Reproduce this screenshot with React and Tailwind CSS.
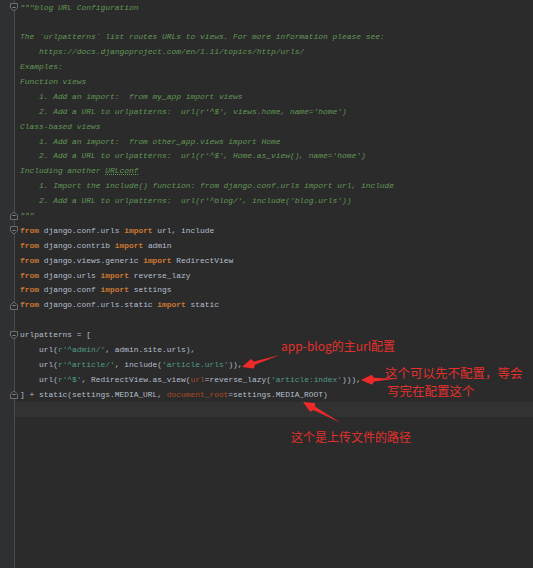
import React from 'react'

const C = {
  doc: 'text-[#629755] italic',
  docu: 'text-[#629755] italic underline decoration-dotted',
  kw: 'text-[#cc7832] font-bold',
  t: 'text-[#b3bfcb]',
  s: 'text-[#4f9c88]',
  p: 'text-[#aa4926]',
}

const d = s => [['doc', s]]

const lines = [
  d('"""blog URL Configuration'),
  [],
  d('The `urlpatterns` list routes URLs to views. For more information please see:'),
  d('    https://docs.djangoproject.com/en/1.11/topics/http/urls/'),
  d('Examples:'),
  d('Function views'),
  d('    1. Add an import:  from my_app import views'),
  d("    2. Add a URL to urlpatterns:  url(r'^$', views.home, name='home')"),
  d('Class-based views'),
  d('    1. Add an import:  from other_app.views import Home'),
  d("    2. Add a URL to urlpatterns:  url(r'^$', Home.as_view(), name='home')"),
  [['doc', 'Including another '], ['docu', 'URLconf']],
  d('    1. Import the include() function: from django.conf.urls import url, include'),
  d("    2. Add a URL to urlpatterns:  url(r'^blog/', include('blog.urls'))"),
  d('"""'),
  [['kw', 'from'], ['t', ' django.conf.urls '], ['kw', 'import'], ['t', ' url, include']],
  [['kw', 'from'], ['t', ' django.contrib '], ['kw', 'import'], ['t', ' admin']],
  [['kw', 'from'], ['t', ' django.views.generic '], ['kw', 'import'], ['t', ' RedirectView']],
  [['kw', 'from'], ['t', ' django.urls '], ['kw', 'import'], ['t', ' reverse_lazy']],
  [['kw', 'from'], ['t', ' django.conf '], ['kw', 'import'], ['t', ' settings']],
  [['kw', 'from'], ['t', ' django.conf.urls.static '], ['kw', 'import'], ['t', ' static']],
  [],
  [['t', 'urlpatterns = [']],
  [['t', '    url('], ['s', "r'^admin/'"], ['t', ', admin.site.urls),']],
  [['t', '    url('], ['s', "r'^article/'"], ['t', ', include('], ['s', "'article.urls'"], ['t', ')),']],
  [['t', '    url('], ['s', "r'^$'"], ['t', ', RedirectView.as_view('], ['p', 'url'], ['t', '=reverse_lazy('], ['s', "'article:index'"], ['t', '))),']],
  [['t', '] + static(settings.MEDIA_URL, '], ['p', 'document_root'], ['t', '=settings.MEDIA_ROOT)']],
  [],
]

// fold markers in the gutter: 'open' points down, 'close' points up
const folds = { 0: 'open', 14: 'close', 15: 'open', 20: 'close', 22: 'open', 26: 'close' }

function Fold({ kind }) {
  const shape = kind === 'open'
    ? 'M0.5 0.5H7.5V5L4 8L0.5 5Z'
    : 'M0.5 8.5H7.5V4L4 1L0.5 4Z'
  return (
    <svg width="8" height="9" viewBox="0 0 8 9" className="absolute right-[-4px]">
      <path d={shape} fill="#2b2b2b" stroke="#6e6e6e" strokeWidth="1" />
      <path d="M2.5 4.5H5.5" stroke="#8a8a8a" strokeWidth="1" />
    </svg>
  )
}

function arrowPoints(x1, y1, x2, y2, head = 11, hw = 5, sw = 1.8) {
  const dx = x2 - x1, dy = y2 - y1
  const L = Math.hypot(dx, dy)
  const ux = dx / L, uy = dy / L
  const nx = -uy, ny = ux
  const bx = x1 + ux * (L - head), by = y1 + uy * (L - head)
  const cx = x1 + ux * (L - head - 2), cy = y1 + uy * (L - head - 2)
  const pts = [
    [x1, y1],
    [cx + nx * sw, cy + ny * sw],
    [bx + nx * hw, by + ny * hw],
    [x2, y2],
    [bx - nx * hw, by - ny * hw],
    [cx - nx * sw, cy - ny * sw],
  ]
  return pts.map(p => p.map(v => v.toFixed(1)).join(',')).join(' ')
}

export default function App() {
  const cjk = { fontFamily: '"Noto Sans CJK SC", "Noto Sans", sans-serif' }
  return (
    <div className="relative w-[533px] h-[568px] overflow-hidden bg-[#2b2b2b] flex" style={{ fontFamily: '"Liberation Mono", monospace' }}>
      <div className="w-[15px] shrink-0 bg-[#2f3032] border-r border-[#4b4b4b] flex flex-col">
        {lines.map((_, i) => (
          <div key={i} className="relative h-[14.9px] flex items-center">
            {folds[i] && <Fold kind={folds[i]} />}
          </div>
        ))}
      </div>

      <div className="flex-1 flex flex-col text-[7.9px]">
        {lines.map((toks, i) => (
          <div key={i} className={'h-[14.9px] pl-[5px] flex items-center whitespace-pre ' + (i === 27 ? 'bg-[#323232]' : '')}>
            {toks.map(([k, s], j) => <span key={j} className={C[k]}>{s}</span>)}
          </div>
        ))}
      </div>

      {/* red annotations laid over the editor */}
      <svg className="absolute inset-0 pointer-events-none" width="533" height="568">
        <polygon points={arrowPoints(280, 355, 242, 367)} fill="#ee2a2a" />
        <polygon points={arrowPoints(394, 379, 361, 380)} fill="#ee2a2a" />
        <polygon points={arrowPoints(341, 423, 303, 402)} fill="#ee2a2a" />
      </svg>
      <div className="absolute left-[281px] top-[338px] text-[12px] leading-[16px] text-[#e3302d]" style={cjk}>app-blog的主url配置</div>
      <div className="absolute left-[385px] top-[364px] text-[12.5px] leading-[18px] text-[#e3302d]" style={cjk}>
        <div>这个可以先不配置，等会</div>
        <div className="pl-[2px]">写完在配置这个</div>
      </div>
      <div className="absolute left-[291px] top-[429px] text-[12px] leading-[16px] text-[#e3302d]" style={cjk}>这个是上传文件的路径</div>
    </div>
  )
}
